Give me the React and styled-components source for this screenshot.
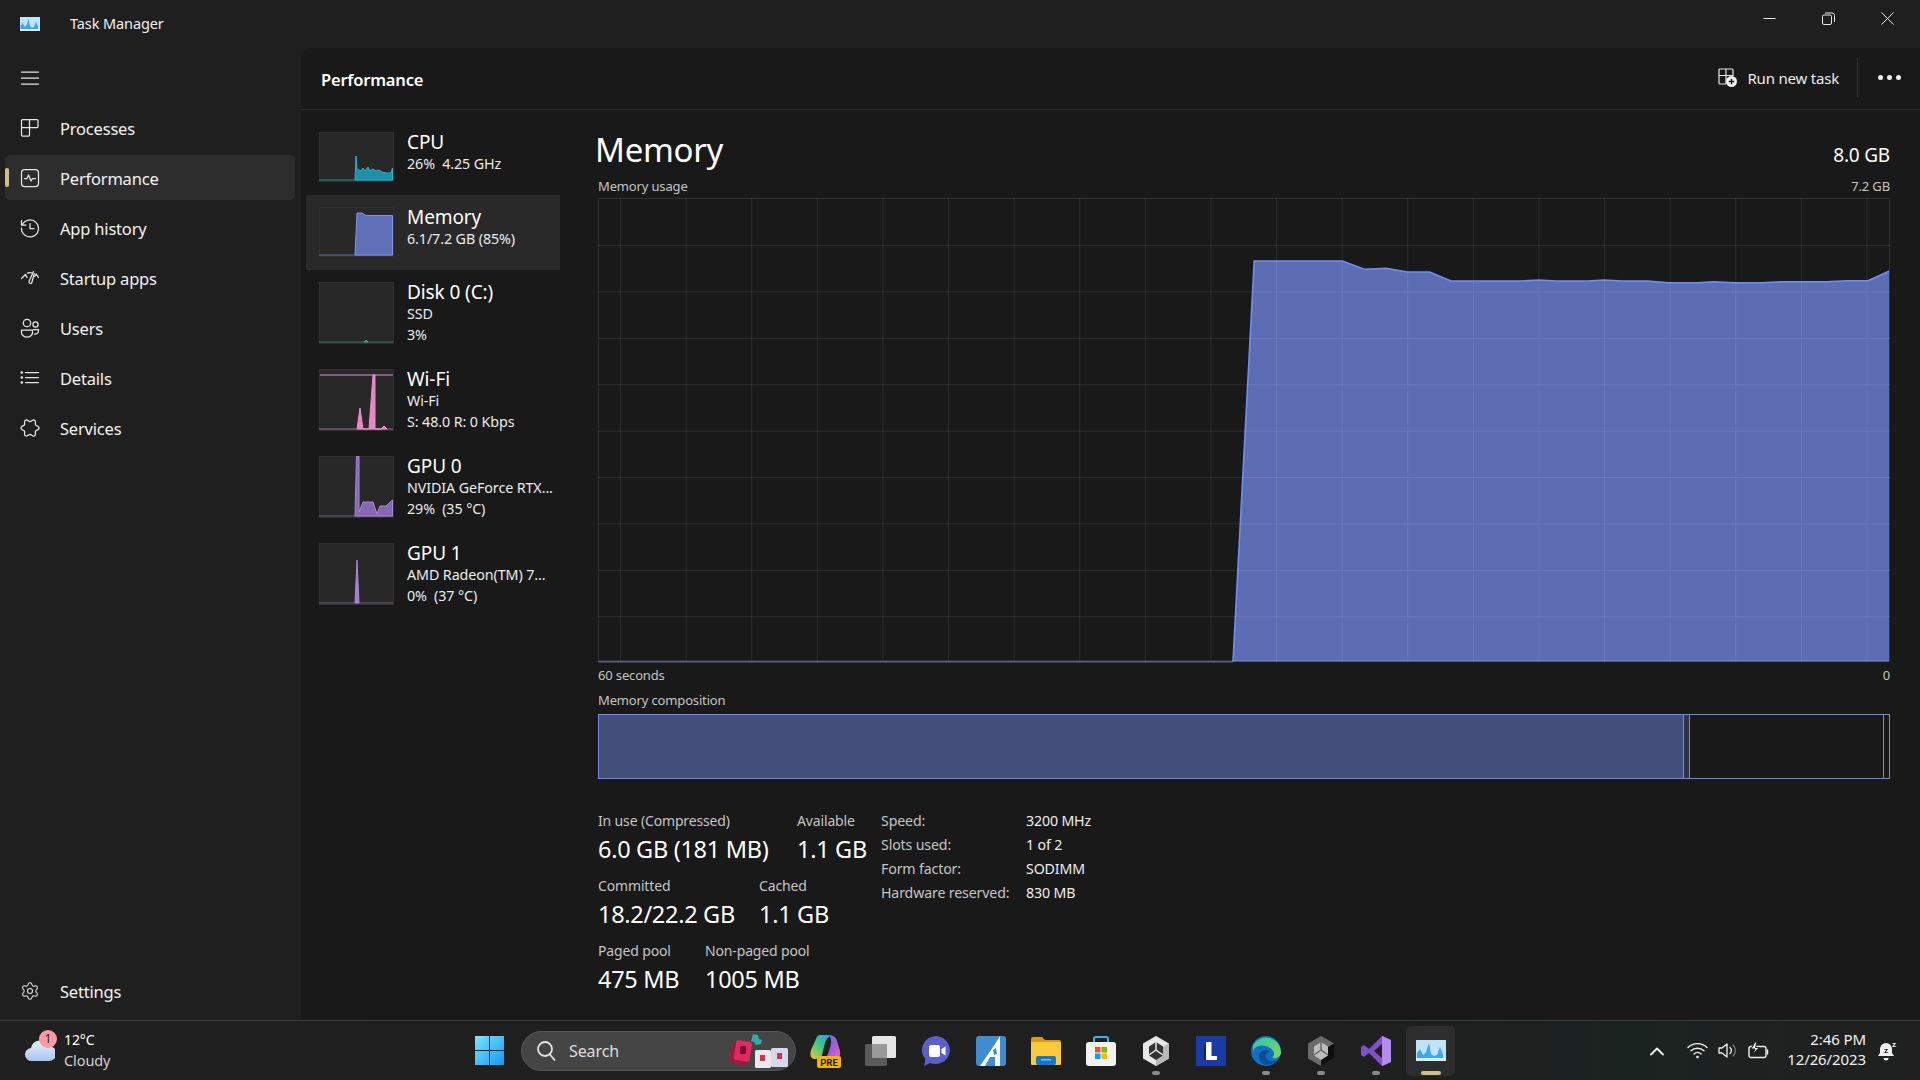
import React from 'react'
import styled, { createGlobalStyle } from 'styled-components'
import { Settings } from 'lucide-react'

const FONT = '"Noto Sans", "Open Sans", sans-serif'

const GlobalStyle = createGlobalStyle`
  html, body {
    margin: 0;
    padding: 0;
    background: #202020;
    overflow: hidden;
  }
  * { box-sizing: border-box; }
`

const Root = styled.div`
  width: 1920px;
  height: 1080px;
  display: flex;
  flex-direction: column;
  background: #201f1f;
  color: #fff;
  font-family: ${FONT};
  overflow: hidden;
`

const TitleBar = styled.header`
  height: 48px;
  flex: none;
  display: flex;
  align-items: center;
  padding-left: 20px;
`

const AppTitle = styled.span`
  margin-left: 30px;
  margin-top: -2px;
  font-size: 14.5px;
  color: #f0f0f0;
  letter-spacing: -0.1px;
`

const WindowControls = styled.div`
  margin-left: auto;
  margin-top: -12px;
  display: flex;
  padding-right: 26px;
  gap: 46px;
  color: #e8e8e8;
`

const Body = styled.div`
  flex: 1;
  min-height: 0;
  display: flex;
`

const Sidebar = styled.nav`
  width: 301px;
  flex: none;
  display: flex;
  flex-direction: column;
  gap: 5px;
  padding: 7px 6px 7px 5px;
`

const NavItem = styled.div`
  position: relative;
  height: 45px;
  flex: none;
  display: flex;
  align-items: center;
  gap: 20px;
  padding-left: 15px;
  border-radius: 5px;
  font-size: 16.5px;
  letter-spacing: -0.2px;
  color: #f2f2f2;
  background: ${(p) => (p.$active ? '#2e2d2d' : 'transparent')};
  margin-top: ${(p) => (p.$bottom ? 'auto' : '0')};

  &::before {
    content: '';
    display: ${(p) => (p.$active ? 'block' : 'none')};
    position: absolute;
    left: 0;
    top: 13px;
    width: 4px;
    height: 19px;
    border-radius: 2px;
    background: #d0bf8e;
  }

  svg { flex: none; }
`

const NavLabel = styled.span`
  padding-top: 2px;
`

const Panel = styled.main`
  flex: 1;
  min-width: 0;
  display: flex;
  flex-direction: column;
  background: #191919;
  border-top-left-radius: 8px;
`

const PanelHeader = styled.div`
  height: 62px;
  flex: none;
  display: flex;
  align-items: center;
  padding: 0 19px 0 20px;
  border-bottom: 1px solid #2d2d2d;
`

const PanelTitle = styled.h1`
  margin: 2px 0 0;
  font-size: 16.5px;
  font-weight: 600;
  letter-spacing: -0.2px;
`

const RunTask = styled.div`
  margin-left: auto;
  display: flex;
  align-items: center;
  gap: 10px;
  margin-bottom: 2px;
  font-size: 15px;
  letter-spacing: -0.2px;
  color: #ececec;
`

const Separator = styled.div`
  width: 1px;
  height: 39px;
  margin: 0 20px 2px 18px;
  background: #333;
`

const MoreDots = styled.div`
  display: flex;
  gap: 4px;
  margin-bottom: 2px;

  span {
    width: 5px;
    height: 5px;
    border-radius: 50%;
    background: #f0f0f0;
  }
`

const PanelBody = styled.div`
  flex: 1;
  min-height: 0;
  display: flex;
`

const MiniList = styled.div`
  width: 297px;
  flex: none;
  padding: 10px 0 0 5px;
`

const MiniRow = styled.div`
  width: 254px;
  height: ${(p) => p.$height}px;
  display: flex;
  gap: 13px;
  padding: 10px 0 0 13px;
  background: ${(p) => (p.$active ? '#292929' : 'transparent')};
`

const Thumb = styled.svg`
  flex: none;
  margin-top: 2px;
  display: block;
`

const MiniText = styled.div`
  min-width: 0;
  white-space: nowrap;
`

const MiniTitle = styled.div`
  font-size: 19px;
  line-height: 24px;
  letter-spacing: -0.1px;
`

const MiniSub = styled.div`
  font-size: 14.3px;
  line-height: 20.5px;
  letter-spacing: -0.1px;
  white-space: pre;
  color: #ebebeb;
`

const Detail = styled.section`
  flex: 1;
  min-width: 0;
  padding-right: 30px;
  display: flex;
  flex-direction: column;
`

const HeadRow = styled.div`
  height: 44px;
  margin: 17px 0 1px;
  display: flex;
  align-items: center;
  justify-content: space-between;
`

const Heading = styled.h2`
  margin: 0 0 0 -3px;
  font-size: 33px;
  font-weight: 400;
  letter-spacing: -0.3px;
`

const Capacity = styled.div`
  padding-top: 12px;
  font-size: 19px;
  letter-spacing: -0.2px;
`

const CaptionRow = styled.div`
  display: flex;
  justify-content: space-between;
  line-height: 20px;
  margin: ${(p) => p.$margin || '0'};
  font-size: 13px;
  letter-spacing: -0.15px;
  color: #c4c4c4;
`

const Chart = styled.svg`
  display: block;
  flex: none;
`

const CompositionBar = styled.div`
  height: 65px;
  flex: none;
  display: flex;
  border: 1px solid #7388ee;
`

const CompSegment = styled.div`
  flex: ${(p) => (p.$width ? `0 0 ${p.$width}px` : 1)};
  background: ${(p) => p.$fill || 'transparent'};
  border-right: ${(p) => (p.$last ? 'none' : '1px solid #7388ee')};
`

const StatsArea = styled.div`
  margin-top: 32px;
  display: flex;
`

const StatsLeft = styled.div`
  width: 283px;
  flex: none;
  display: flex;
  flex-direction: column;
  gap: 9px;
`

const StatRow = styled.div`
  display: flex;
`

const Stat = styled.div`
  flex: 0 0 ${(p) => p.$width}px;
  white-space: nowrap;
`

const StatLabel = styled.div`
  font-size: 14px;
  line-height: 20px;
  letter-spacing: -0.15px;
  color: #c4c4c4;
`

const StatValue = styled.div`
  font-size: 23.5px;
  line-height: 36px;
  letter-spacing: -0.3px;
`

const SpecGrid = styled.div`
  margin-top: -3px;
  display: grid;
  grid-template-columns: 145px auto;
  grid-auto-rows: 24px;
  align-items: center;
  font-size: 14.2px;
  letter-spacing: -0.15px;
  color: #c4c4c4;

  b {
    font-weight: 400;
    color: #efefef;
  }
`

const Taskbar = styled.footer`
  height: 60px;
  flex: none;
  display: flex;
  align-items: center;
  border-top: 1px solid #3a3a3a;
  background: linear-gradient(90deg, #202020 0%, #1f1f1f 70%, #1b2321 85%, #202020 100%);
`

const Weather = styled.div`
  position: relative;
  width: 475px;
  flex: none;
  display: flex;
  align-items: center;
  gap: 9px;
  padding-left: 25px;
  margin-top: -2px;
  font-size: 14px;
  line-height: 20px;
  letter-spacing: -0.1px;

  small {
    display: block;
    font-size: 14.5px;
    color: #d0d0d0;
  }
`

const Badge = styled.span`
  position: absolute;
  left: 39px;
  top: 0;
  width: 18px;
  height: 18px;
  border-radius: 50%;
  background: #ff9aa2;
  color: #2a1a1a;
  font-size: 12px;
  line-height: 18px;
  text-align: center;
`

const SearchBox = styled.div`
  margin-left: 17px;
  width: 275px;
  height: 40px;
  flex: none;
  display: flex;
  align-items: center;
  gap: 13px;
  padding: 0 4px 0 14px;
  border-radius: 20px;
  background: #454545;
  border: 1px solid #555;
  font-size: 16px;
  color: #dedede;
  letter-spacing: -0.1px;

  svg:last-child { margin-left: auto; }
`

const TaskIcons = styled.div`
  margin-left: 2px;
  display: flex;
`

const TaskIcon = styled.div`
  position: relative;
  width: 49px;
  height: 50px;
  margin: 0 3px;
  display: flex;
  align-items: center;
  justify-content: center;
  border-radius: 5px;
  background: ${(p) => (p.$active ? '#2d2d2d' : 'transparent')};

  &::after {
    content: '';
    display: ${(p) => (p.$running || p.$active ? 'block' : 'none')};
    position: absolute;
    bottom: 1px;
    left: 50%;
    transform: translateX(-50%);
    width: ${(p) => (p.$active ? 20 : 8)}px;
    height: 4px;
    border-radius: 2px;
    background: ${(p) => (p.$active ? '#d0bf8e' : '#8a8a8a')};
  }
`

const Tray = styled.div`
  margin-left: auto;
  display: flex;
  align-items: center;
  padding-right: 22px;
  color: #f0f0f0;
`

const TrayIcons = styled.div`
  display: flex;
  align-items: center;
  gap: 10px;
  margin-right: 18px;
`

const TrayChevron = styled.svg`
  margin-right: 12px;
`

const Clock = styled.div`
  margin: -3px 12px 0 0;
  text-align: right;
  font-size: 15px;
  line-height: 20px;
  letter-spacing: -0.1px;
`

const NavIcon = ({ children }) => (
  <svg width="20" height="20" viewBox="0 0 20 20" fill="none" stroke="#e6e6e6" strokeWidth="1.25" strokeLinecap="round" strokeLinejoin="round">
    {children}
  </svg>
)

const TaskManagerIcon = ({ size = 20, height = 14 }) => (
  <svg width={size} height={height} viewBox="0 0 30 21">
    <rect width="30" height="21" fill="#bfe3f7" />
    <rect y="18" width="30" height="3" fill="#d8eefb" />
    <path d="M1 18V13l3-4 3 6 3-3 3-9 2 11 3 2 3-1 3-8 3 8v3z" fill="#3ea6ec" />
  </svg>
)

const Sparkline = ({ width, height, base, area, color, fill, line, top }) => (
  <Thumb width={width} height={height} viewBox={`0 0 ${width} ${height}`}>
    <rect x="0.5" y="0.5" width={width - 1} height={height - 1} fill="#282828" stroke="#2f2f2f" />
    {top && <line x1="1" y1={top} x2={width - 1} y2={top} stroke={color} />}
    <line x1="0" y1={base} x2={width - 1} y2={base} stroke={line || color} strokeOpacity="0.65" />
    {area && <polygon points={area} fill={fill} stroke={color} strokeWidth="1" />}
  </Thumb>
)

const miniRows = [
  {
    title: 'CPU', lines: ['26%  4.25 GHz'], height: 75,
    spark: { width: 75, height: 50, base: 48, color: '#27b5cf', fill: '#1f8fa5', area: '36,48 37,24 38,37 42,39 44,36 46,39 49,35 51,39 54,37 57,39 60,38 63,40 67,41 72,41 73.5,36 73.5,48' },
  },
  {
    title: 'Memory', lines: ['6.1/7.2 GB (85%)'], height: 75, active: true,
    spark: { width: 75, height: 50, base: 48, color: '#7f96ee', fill: '#5f6fb8', area: '36,48 38,6 43,6 47,8.5 73.5,8.5 73.5,48' },
  },
  {
    title: 'Disk 0 (C:)', lines: ['SSD', '3%'], height: 87,
    spark: { width: 75, height: 62, base: 60, color: '#3f9f7f', fill: '#3f9f7f', area: '45,60 47,58 49,60' },
  },
  {
    title: 'Wi-Fi', lines: ['Wi-Fi', 'S: 48.0 R: 0 Kbps'], height: 87,
    spark: { width: 75, height: 62, base: 60, top: 6, color: '#ec8ccb', fill: '#e488c4', area: '38,60 41,39 44,60 50,60 54,6 56,6 56,60 62,60 65,57 68,60' },
  },
  {
    title: 'GPU 0', lines: ['NVIDIA GeForce RTX...', '29%  (35 °C)'], height: 87,
    spark: { width: 75, height: 62, base: 60, color: '#a888d8', fill: '#8668b0', line: '#8a72a8', area: '36,60 37.5,0 40,0 40,56 44,46 54,46 58,58 61,50 67,50 73.5,44 73.5,60' },
  },
  {
    title: 'GPU 1', lines: ['AMD Radeon(TM) 7...', '0%  (37 °C)'], height: 87,
    spark: { width: 75, height: 62, base: 60, color: '#a888d8', fill: '#a080d0', line: '#8a72a8', area: '36,60 38,17 40,60' },
  },
]

// scalloped outline for the Services icon
const lobedOutline = Array.from({ length: 60 }, (_, i) => {
  const angle = (i / 60) * Math.PI * 2 + 0.3
  const radius = 7.7 + 1.35 * Math.cos(angle * 6)
  return `${(10 + radius * Math.cos(angle)).toFixed(2)},${(10 + radius * Math.sin(angle)).toFixed(2)}`
}).join(' ')

const navItems = [
  { label: 'Processes', icon: <><rect x="1.5" y="1.5" width="8" height="8" rx="1" /><path d="M9.5 1.5H17a1 1 0 0 1 1 1v6a1 1 0 0 1-1 1H9.5" /><path d="M1.5 9.5V17a1 1 0 0 0 1 1h6a1 1 0 0 0 1-1V9.5" /></> },
  { label: 'Performance', active: true, icon: <><rect x="1.5" y="1.5" width="17" height="17" rx="3" /><path d="M4.5 10.5h2.5l1.5-3.5 2.5 6 1.5-2.5h3" /></> },
  { label: 'App history', icon: <><path d="M1.5 2.5v4.5H6" /><path d="M2.2 7A8.5 8.5 0 1 1 1.5 10" /><path d="M10 5.5v5h4" /></> },
  { label: 'Startup apps', icon: <><path d="M1.5 10.5L5.5 6.5l1.5 3" /><path d="M7.5 5.2c1.5-.6 3-.6 4.5-.2" /><path d="M13.5 3.5L9 13.5a1.6 1.6 0 0 0 2.7 1.5l2.6-9.500" /><path d="M14.5 8.5l1.8-2.5 2.2 3.5" /></> },
  { label: 'Users', icon: <><circle cx="7" cy="5" r="3.7" /><circle cx="15.5" cy="6.5" r="2.6" /><path d="M1.5 12h11v2.5a5 4.2 0 0 1-11 0z" /><path d="M13.5 11.5h5v1.5a3.3 3.3 0 0 1-4.2 3" /></> },
  { label: 'Details', icon: <><path d="M5.5 4.5h13M5.5 9.5h13M5.5 14.5h13" /><circle cx="1.8" cy="4.5" r=".7" fill="#e6e6e6" /><circle cx="1.8" cy="9.5" r=".7" fill="#e6e6e6" /><circle cx="1.8" cy="14.5" r=".7" fill="#e6e6e6" /></> },
  { label: 'Services', icon: <polygon points={lobedOutline} /> },
]

const stats = [
  { widths: [199, 84], items: [['In use (Compressed)', '6.0 GB (181 MB)'], ['Available', '1.1 GB']] },
  { widths: [161, 122], items: [['Committed', '18.2/22.2 GB'], ['Cached', '1.1 GB']] },
  { widths: [107, 176], items: [['Paged pool', '475 MB'], ['Non-paged pool', '1005 MB']] },
]

const specs = [
  ['Speed:', '3200 MHz'],
  ['Slots used:', '1 of 2'],
  ['Form factor:', 'SODIMM'],
  ['Hardware reserved:', '830 MB'],
]

// samples read off the reference, in page pixels
const memorySamples = [
  [1233, 661.7], [1254.2, 261], [1342.3, 261], [1364.4, 269.3], [1386, 268.3], [1407.5, 272], [1429.6, 272],
  [1451, 281], [1521.4, 281], [1538.8, 280], [1555.8, 281], [1588, 281], [1604, 280], [1622.4, 281],
  [1647.7, 281], [1668.3, 282.7], [1698, 282.7], [1713.3, 281.7], [1735, 282.7], [1762.4, 282.7],
  [1780.8, 281.7], [1826.7, 281.7], [1847.4, 280.7], [1868, 280.7], [1889, 271.3],
]

const CHART_W = 1292
const CHART_H = 465
const chartPoints = memorySamples.map(([x, y]) => `${x - 598},${y - 198}`).join(' ')
const hLines = Array.from({ length: 9 }, (_, i) => 47.5 + i * 46.4)
const vLines = Array.from({ length: 20 }, (_, i) => 22.5 + i * 65.6)

const MemoryChart = () => (
  <Chart width={CHART_W} height={CHART_H} viewBox={`0 0 ${CHART_W} ${CHART_H}`}>
    <polygon points={`${chartPoints} 1291,463.7`} fill="#6a7cd0" fillOpacity="0.85" />
    <polyline points={chartPoints} fill="none" stroke="#708ff0" strokeWidth="1.6" />
    {hLines.map((y) => <line key={y} x1="0" x2={CHART_W} y1={y} y2={y} stroke="#fff" strokeOpacity="0.085" />)}
    {vLines.map((x) => <line key={x} x1={x} x2={x} y1="0" y2={CHART_H} stroke="#fff" strokeOpacity="0.085" />)}
    <rect x="0.5" y="0.5" width={CHART_W - 1} height={CHART_H - 3} fill="none" stroke="#fff" strokeOpacity="0.1" />
    <line x1="0" x2="635" y1="463.7" y2="463.7" stroke="#596080" strokeWidth="1.4" />
  </Chart>
)

const CopilotIcon = () => (
  <svg width="32" height="36" viewBox="0 0 32 36">
    <defs>
      <linearGradient id="cpA" x1="0" y1="1" x2="1" y2="0"><stop offset="0" stopColor="#f5c52c" /><stop offset=".5" stopColor="#3cc48c" /><stop offset="1" stopColor="#2f9be8" /></linearGradient>
      <linearGradient id="cpB" x1="0" y1="0" x2="1" y2="1"><stop offset="0" stopColor="#3a7be8" /><stop offset=".6" stopColor="#b05ad8" /><stop offset="1" stopColor="#f06aa8" /></linearGradient>
    </defs>
    <path d="M10 2h12c-3 1-6 4-7 8l-3 12c-1 3-4 4-8 4-4-1-4-5-3-9L6 6c.5-2 2-4 4-4z" fill="url(#cpA)" />
    <path d="M18 2c5 0 8 2 9 6l3 10c1 4-1 8-6 8H13c3-1 5-4 6-8l2-7c.5-3 0-7-3-9z" fill="url(#cpB)" />
    <rect x="7" y="23" width="24" height="12" rx="2" fill="#f6b400" />
    <text x="19" y="33" textAnchor="middle" fontFamily="Roboto, sans-serif" fontWeight="700" fontSize="9.5" fill="#222">PRE</text>
  </svg>
)

const TaskViewIcon = () => (
  <svg width="31" height="30" viewBox="0 0 31 30">
    <rect x="0" y="8" width="22" height="22" rx="1.5" fill="#5a5a5a" />
    <rect x="7" y="0" width="24" height="22" rx="1.5" fill="#e6e6e6" />
    <rect x="7" y="8" width="15" height="14" fill="#9a9a9a" />
  </svg>
)

const MeetIcon = () => (
  <svg width="30" height="30" viewBox="0 0 30 30">
    <path d="M15 0a14.5 14 0 1 1-6 27l-6 3 1.500-7A14.500 14 0 0 1 15 0z" fill="#5b5fc7" />
    <rect x="8" y="9" width="11" height="12" rx="2" fill="#fff" />
    <path d="M20.500 13l4-2.500v9l-4-2.500z" fill="#fff" />
  </svg>
)

const AiIcon = () => (
  <svg width="30" height="30" viewBox="0 0 30 30">
    <rect width="30" height="30" rx="3" fill="#3f8ccf" />
    <path d="M4 30L19 8l5-8v30h-5v-9h-5l-5 9z" fill="#fff" />
    <path d="M17 14l3-2 1 6-3 1z" fill="#3f8ccf" />
  </svg>
)

const FolderIcon = () => (
  <svg width="30" height="28" viewBox="0 0 30 28">
    <path d="M0 2a2 2 0 0 1 2-2h9l3 3h14a2 2 0 0 1 2 2v3H0z" fill="#d89a0e" />
    <rect y="5" width="30" height="23" rx="1" fill="#f8c93c" />
    <rect x="5" y="19" width="20" height="9" rx="2" fill="#1a76c8" />
    <rect x="10" y="22" width="10" height="1.500" fill="#7cc0ee" />
  </svg>
)

const StoreIcon = () => (
  <svg width="30" height="30" viewBox="0 0 30 30">
    <path d="M8 8V3a2 2 0 0 1 2-2h10a2 2 0 0 1 2 2v5" fill="none" stroke="#3ab4f0" strokeWidth="2" />
    <rect y="6" width="30" height="24" rx="3" fill="#f2f2f2" />
    <rect x="9" y="11" width="5.500" height="5.500" fill="#f25022" />
    <rect x="15.500" y="11" width="5.500" height="5.500" fill="#7fba00" />
    <rect x="9" y="17.500" width="5.500" height="5.500" fill="#00a4ef" />
    <rect x="15.500" y="17.500" width="5.500" height="5.500" fill="#ffb900" />
  </svg>
)

const UnityIcon = ({ shell, side, core }) => (
  <svg width="26" height="30" viewBox="0 0 26 30">
    <polygon points="13,0 26,7.500 26,22.500 13,30 0,22.500 0,7.500" fill={shell} />
    <polygon points="13,15 26,7.500 26,22.500 13,30" fill={side} />
    <polygon points="13,6 20,10.500 20,19.500 13,24 6,19.500 6,10.500" fill={core} />
    <path d="M13 6v8l7 5M13 14l-7 5" stroke={shell} strokeWidth="1.500" fill="none" />
  </svg>
)

const LetterIcon = () => (
  <svg width="30" height="30" viewBox="0 0 30 30">
    <rect width="30" height="30" fill="#1a3aa6" />
    <path d="M10 6h5.500v14H21v4H10z" fill="#fff" />
    <path d="M8 10l2-3v17H8z" fill="#12245e" />
  </svg>
)

const EdgeIcon = () => (
  <svg width="30" height="30" viewBox="0 0 30 30">
    <defs>
      <linearGradient id="edgeA" x1="0" y1="0" x2="1" y2="1"><stop offset="0" stopColor="#2fc5a8" /><stop offset="1" stopColor="#7ad860" /></linearGradient>
    </defs>
    <circle cx="15" cy="15" r="15" fill="#0f6fc0" />
    <path d="M2 9A15 15 0 0 1 30 16c0 5-5 7-9 6 3-2 3-7-2-10C12 8 5 9 2 15z" fill="url(#edgeA)" />
    <path d="M12 28c-5-3-6-10-1-13 3-2 7-1 8 1-3 0-6 3-3 7 2 3 7 3 10 1-3 4-9 6-14 4z" fill="#0a4f94" />
  </svg>
)

const VsIcon = () => (
  <svg width="30" height="30" viewBox="0 0 30 30">
    <path d="M21 0L8 13 3 9l-3 2v8l3 2 5-4 13 13 9-4V4zM21 8v14l-8-7z" fill="#7d52c8" fillRule="evenodd" />
    <path d="M21 0l9 4v22l-9 4v-8l-0 0V8z" fill="#b48cf0" />
  </svg>
)

const CloudIcon = () => (
  <svg width="30" height="25" viewBox="0 0 30 25">
    <defs>
      <linearGradient id="cloud" x1="0" y1="0" x2="0" y2="1"><stop offset="0" stopColor="#e8f0fc" /><stop offset="1" stopColor="#a9c4f2" /></linearGradient>
    </defs>
    <path d="M7 24a6.500 6.500 0 0 1-1-13A9.500 9.500 0 0 1 24 9a7.500 7.500 0 0 1 0 15z" fill="url(#cloud)" />
  </svg>
)

const DoodleIcon = () => (
  <svg width="62" height="36" viewBox="0 0 62 36">
    <rect x="2" y="10" width="17" height="21" rx="2" transform="rotate(18 10 20)" fill="#a8143e" />
    <rect x="6" y="8" width="16" height="20" rx="2" transform="rotate(8 14 18)" fill="#e02a64" />
    <rect x="11" y="13" width="6" height="8" rx="1" fill="#7a0f30" />
    <path d="M24 1l5 1 1 4 3 1-1 4-5 1-2-3-3-1z" fill="#3aa7a8" />
    <rect x="26" y="17" width="16" height="18" rx="1.500" fill="#e8e8ee" />
    <rect x="42" y="15" width="17" height="19" rx="1.500" fill="#d6d9ea" />
    <rect x="31" y="22" width="5" height="6" fill="#d8304a" />
    <rect x="48" y="20" width="5" height="6" fill="#d8304a" />
  </svg>
)

const taskIcons = [
  { key: 'copilot', node: <CopilotIcon /> },
  { key: 'view', node: <TaskViewIcon /> },
  { key: 'meet', node: <MeetIcon /> },
  { key: 'ai', node: <AiIcon /> },
  { key: 'folder', node: <FolderIcon /> },
  { key: 'store', node: <StoreIcon /> },
  { key: 'unity', running: true, node: <UnityIcon shell="#e8e8e8" side="#b8b8b8" core="#333" /> },
  { key: 'letter', node: <LetterIcon /> },
  { key: 'edge', running: true, node: <EdgeIcon /> },
  { key: 'unity2', running: true, node: <UnityIcon shell="#6a6a6a" side="#0e0e0e" core="#bdbdbd" /> },
  { key: 'vs', running: true, node: <VsIcon /> },
  { key: 'tm', active: true, node: <TaskManagerIcon size={30} height={27} /> },
]

export default function App() {
  return (
    <Root>
      <GlobalStyle />
      <TitleBar>
        <TaskManagerIcon />
        <AppTitle>Task Manager</AppTitle>
        <WindowControls>
          <svg width="13" height="13" viewBox="0 0 13 13" stroke="currentColor" fill="none"><path d="M0.500 6.500h12" /></svg>
          <svg width="13" height="13" viewBox="0 0 13 13" stroke="currentColor" fill="none"><rect x="0.500" y="3" width="9" height="9.500" rx="1.500" /><path d="M3 1h7a2.500 2.500 0 0 1 2.500 2.500V10" /></svg>
          <svg width="13" height="13" viewBox="0 0 13 13" stroke="currentColor" fill="none"><path d="M0.500 0.500l12 12M12.500 0.500l-12 12" /></svg>
        </WindowControls>
      </TitleBar>

      <Body>
        <Sidebar>
          <NavItem>
            <NavIcon><path d="M1.500 4h17M1.500 10h17M1.500 16h17" /></NavIcon>
          </NavItem>
          {navItems.map((item) => (
            <NavItem key={item.label} $active={item.active}>
              <NavIcon>{item.icon}</NavIcon>
              <NavLabel>{item.label}</NavLabel>
            </NavItem>
          ))}
          <NavItem $bottom>
            <Settings size={20} strokeWidth={1.25} color="#e6e6e6" />
            <NavLabel>Settings</NavLabel>
          </NavItem>
        </Sidebar>

        <Panel>
          <PanelHeader>
            <PanelTitle>Performance</PanelTitle>
            <RunTask>
              <svg width="19" height="19" viewBox="0 0 19 19" fill="none" stroke="#e6e6e6" strokeWidth="1.200">
                <path d="M8 16H2a1 1 0 0 1-1-1V2a1 1 0 0 1 1-1h12a1 1 0 0 1 1 1v6M1 7.500h14M8 1v15" />
                <circle cx="13.500" cy="13.500" r="5.500" fill="#f0f0f0" stroke="none" />
                <path d="M13.500 10.800v5.400M10.800 13.500h5.400" stroke="#191919" strokeWidth="1.400" />
              </svg>
              Run new task
            </RunTask>
            <Separator />
            <MoreDots><span /><span /><span /></MoreDots>
          </PanelHeader>

          <PanelBody>
            <MiniList>
              {miniRows.map((row) => (
                <MiniRow key={row.title} $height={row.height} $active={row.active}>
                  <Sparkline {...row.spark} />
                  <MiniText>
                    <MiniTitle>{row.title}</MiniTitle>
                    {row.lines.map((line) => <MiniSub key={line}>{line}</MiniSub>)}
                  </MiniText>
                </MiniRow>
              ))}
            </MiniList>

            <Detail>
              <HeadRow>
                <Heading>Memory</Heading>
                <Capacity>8.0 GB</Capacity>
              </HeadRow>
              <CaptionRow $margin="4px 0 2px">
                <span>Memory usage</span>
                <span>7.2 GB</span>
              </CaptionRow>
              <MemoryChart />
              <CaptionRow $margin="2px 0 5px">
                <span>60 seconds</span>
                <span>0</span>
              </CaptionRow>
              <CaptionRow $margin="0 0 4px">
                <span>Memory composition</span>
              </CaptionRow>
              <CompositionBar>
                <CompSegment $width={1085} $fill="#444e7b" />
                <CompSegment $width={6} $fill="#30354f" />
                <CompSegment />
                <CompSegment $width={5} $last />
              </CompositionBar>

              <StatsArea>
                <StatsLeft>
                  {stats.map((row) => (
                    <StatRow key={row.items[0][0]}>
                      {row.items.map(([label, value], i) => (
                        <Stat key={label} $width={row.widths[i]}>
                          <StatLabel>{label}</StatLabel>
                          <StatValue>{value}</StatValue>
                        </Stat>
                      ))}
                    </StatRow>
                  ))}
                </StatsLeft>
                <SpecGrid>
                  {specs.map(([label, value]) => (
                    <React.Fragment key={label}>
                      <span>{label}</span>
                      <b>{value}</b>
                    </React.Fragment>
                  ))}
                </SpecGrid>
              </StatsArea>
            </Detail>
          </PanelBody>
        </Panel>
      </Body>

      <Taskbar>
        <Weather>
          <CloudIcon />
          <Badge>1</Badge>
          <div>
            12°C
            <small>Cloudy</small>
          </div>
        </Weather>
        <svg width="29" height="29" viewBox="0 0 29 29">
          <defs>
            <linearGradient id="startLogo" x1="0" y1="0" x2="1" y2="1"><stop offset="0" stopColor="#7fe3ff" /><stop offset="1" stopColor="#0f9bf0" /></linearGradient>
          </defs>
          <path d="M0 0h14v14H0zM15 0h14v14H15zM0 15h14v14H0zM15 15h14v14H15z" fill="url(#startLogo)" />
        </svg>
        <SearchBox>
          <svg width="20" height="22" viewBox="0 0 20 22" fill="none" stroke="#e4e4e4" strokeWidth="1.800" strokeLinecap="round">
            <circle cx="9" cy="9" r="7" />
            <path d="M14 14.500l4.500 5.500" />
          </svg>
          Search
          <DoodleIcon />
        </SearchBox>
        <TaskIcons>
          {taskIcons.map((icon) => (
            <TaskIcon key={icon.key} $running={icon.running} $active={icon.active}>
              {icon.node}
            </TaskIcon>
          ))}
        </TaskIcons>
        <Tray>
          <TrayIcons>
            <TrayChevron width="16" height="10" viewBox="0 0 16 10" fill="none" stroke="#f2f2f2" strokeWidth="1.800" strokeLinecap="round" strokeLinejoin="round"><path d="M2 8.500L8 2.500l6 6" /></TrayChevron>
            <svg width="21" height="17" viewBox="0 0 21 17" fill="none" stroke="#f0f0f0" strokeWidth="1.400" strokeLinecap="round">
              <path d="M1 5.500a13.500 13.500 0 0 1 19 0M4 8.800a9.500 9.500 0 0 1 13 0M7 12a5 5 0 0 1 7 0" />
              <circle cx="10.500" cy="15" r="1.300" fill="#f0f0f0" stroke="none" />
            </svg>
            <svg width="20" height="17" viewBox="0 0 20 17" fill="none" stroke="#f0f0f0" strokeWidth="1.300" strokeLinejoin="round" strokeLinecap="round">
              <path d="M1 6v5h3l5 4V2L4 6z" />
              <path d="M12 5.500a4 4 0 0 1 0 6" />
              <path d="M15 3a7.500 7.500 0 0 1 0 11" stroke="#777" />
            </svg>
            <svg width="21" height="17" viewBox="0 0 21 17" fill="none" stroke="#f0f0f0" strokeWidth="1.400" strokeLinejoin="round">
              <rect x="1" y="4.500" width="17" height="11" rx="2" />
              <path d="M19.500 8v4" strokeLinecap="round" />
              <path d="M7 0L3 7h4L4.500 13 11 5.500H7.500L9 0z" fill="#f0f0f0" stroke="#1d2120" strokeWidth="1" />
            </svg>
          </TrayIcons>
          <Clock>
            <div>2:46 PM</div>
            <div>12/26/2023</div>
          </Clock>
          <svg width="20" height="22" viewBox="0 0 20 22">
            <path d="M8 3a6 6 0 0 1 6 6v4l2 3H0l2-3V9a6 6 0 0 1 6-6z" fill="#efefef" />
            <path d="M5.500 18h5a2.500 2.500 0 0 1-5 0z" fill="#efefef" />
            <text x="8" y="13" textAnchor="middle" fontFamily="Roboto, sans-serif" fontWeight="700" fontSize="8" fill="#222">z</text>
            <text x="16" y="7" textAnchor="middle" fontFamily="Roboto, sans-serif" fontWeight="700" fontSize="8" fill="#efefef">z</text>
          </svg>
        </Tray>
      </Taskbar>
    </Root>
  )
}
